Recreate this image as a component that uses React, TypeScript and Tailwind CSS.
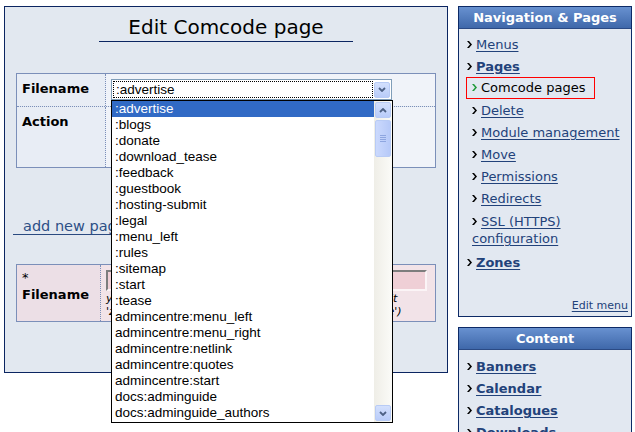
const pages = [
  ':advertise',
  ':blogs',
  ':donate',
  ':download_tease',
  ':feedback',
  ':guestbook',
  ':hosting-submit',
  ':legal',
  ':menu_left',
  ':rules',
  ':sitemap',
  ':start',
  ':tease',
  'admincentre:menu_left',
  'admincentre:menu_right',
  'admincentre:netlink',
  'admincentre:quotes',
  'admincentre:start',
  'docs:adminguide',
  'docs:adminguide_authors',
];

const Bullet = ({ green }: { green?: boolean }) => (
  <svg width="5" height="7" viewBox="0 0 5 7" className="mr-[4px] inline-block align-[1px]">
    <path d="M0 0 H2 L5 3.5 L2 7 H0 L3 3.5 Z" fill={green ? '#1f9a3a' : '#000'} />
  </svg>
);

const XpButton = ({ up }: { up?: boolean }) => (
  <div className="flex h-[16px] w-[16px] items-center justify-center rounded-[2px] border border-[#b8cbf5] bg-gradient-to-b from-[#d3e0fd] to-[#b9ccf9]">
    <svg width="8" height="5" viewBox="0 0 8 5">
      <path d={up ? 'M1 4 L4 1 L7 4' : 'M1 1 L4 4 L7 1'} fill="none" stroke="#4d6185" strokeWidth="1.8" />
    </svg>
  </div>
);

const NavLink = ({ label, bold, sub }: { label: string; bold?: boolean; sub?: boolean }) => (
  <div className={sub ? 'pl-[13px]' : 'pl-[8px]'}>
    <Bullet />
    <a className={`text-[#22427a] underline underline-offset-[2px] ${bold ? 'font-bold' : ''}`}>{label}</a>
  </div>
);

const Panel = ({ title, children, className }: { title: string; children: React.ReactNode; className?: string }) => (
  <div className={`flex flex-col border border-[#0d2a66] bg-[#e2e8f1] ${className ?? ''}`}>
    <div className="h-[22px] border-b border-[#2b4a84] bg-gradient-to-b from-[#6891d0] to-[#3f68aa] text-center text-[13px] leading-[22px] font-bold text-white">
      {title}
    </div>
    {children}
  </div>
);

export default function App() {
  return (
    <div className="flex gap-[10px] pt-[6px] pl-[4px] font-['DejaVu_Sans',sans-serif] text-[13px] leading-[16px] text-black">
      {/* main column */}
      <div className="relative flex h-[367px] w-[444px] flex-col border border-[#0b2561] bg-[#e2e8f0]">
        <h1 className="mx-auto mt-[8px] w-[254px] border-b border-[#0b2561] pb-[2px] text-center text-[20px] leading-[24px]">
          Edit Comcode page
        </h1>

        <div className="mt-[31px] ml-[11px] w-[420px] border border-[#7b8fb9]">
          <div className="flex h-[33px] border-b border-dotted border-[#7b8fb9]">
            <div className="w-[89px] border-r border-dotted border-[#7b8fb9] bg-[#e8edf5] pt-[7px] pl-[5px] font-bold">
              Filename
            </div>
            <div className="flex-1 bg-[#f0f3f9] pt-[5px] pl-[5px]">
              <div className="flex h-[21px] w-[281px] items-center border border-[#7f9db9] bg-white pr-[1px] font-['Liberation_Sans',sans-serif] text-[13.5px]">
                <div className="mx-[1px] h-[17px] flex-1 border border-dotted border-black pl-[2px] leading-[15px]">:advertise</div>
                <XpButton />
              </div>
            </div>
          </div>
          <div className="flex h-[60px]">
            <div className="w-[89px] border-r border-dotted border-[#7b8fb9] bg-[#e8edf5] pt-[7px] pl-[5px] font-bold">
              Action
            </div>
            <div className="flex-1 bg-[#f0f3f9]" />
          </div>
        </div>

        <h2 className="mt-[50px] ml-[8px] w-[260px] border-b border-[#2a4a80] pl-[10px] text-[14.5px] leading-[16px] text-[#2d4f86]">
          add new page
        </h2>

        <div className="mt-[29px] ml-[11px] flex h-[58px] w-[420px] border border-[#7b8fb9]">
          <div className="w-[84px] border-r border-dotted border-[#7b8fb9] bg-[#ecdfe6] pt-[5px] pl-[5px] font-bold">
            <div className="font-normal">*</div>
            <div className="mt-[1px]">Filename</div>
          </div>
          <div className="flex-1 overflow-hidden bg-[#f2e3e8] pt-[5px] pl-[5px]">
            <div className="h-[21px] w-[321px] border-t-2 border-r-2 border-b-2 border-l-2 border-t-[#7d7d7d] border-r-[#fbf4f6] border-b-[#fbf4f6] border-l-[#7d7d7d] bg-[#efcfd6]" />
            <div className="mt-[1px] text-[11px] leading-[13px] whitespace-nowrap italic">
              <div>you may put a zone name and the colon in front of it</div>
              <div>'zone:page_name' (for example, 'site:example_page')</div>
            </div>
          </div>
        </div>

        {/* open dropdown list */}
        <div className="absolute top-[93px] left-[106px] flex h-[323px] w-[282px] border border-black bg-white font-['Liberation_Sans',sans-serif] text-[13.5px]">
          <div className="flex-1">
            {pages.map((p, i) => (
              <div
                key={p}
                className={`h-[16px] pl-[3px] leading-[16px] ${i === 0 ? 'bg-[#316ac5] text-white' : 'text-black'}`}
              >
                {p}
              </div>
            ))}
          </div>
          <div className="flex w-[18px] flex-col items-center bg-gradient-to-r from-[#efeee7] to-[#fbfbf8] py-[1px]">
            <XpButton up />
            <div className="mt-[2px] flex h-[37px] w-[16px] flex-col items-center justify-center gap-[1px] rounded-[2px] border border-[#b8cbf5] bg-gradient-to-r from-[#cbd9fd] to-[#b6c9f8]">
              <div className="h-[1px] w-[6px] bg-[#8ea6e0]" />
              <div className="h-[1px] w-[6px] bg-[#8ea6e0]" />
              <div className="h-[1px] w-[6px] bg-[#8ea6e0]" />
              <div className="h-[1px] w-[6px] bg-[#8ea6e0]" />
            </div>
            <div className="flex-1" />
            <XpButton />
          </div>
        </div>
      </div>

      {/* sidebar */}
      <div className="flex w-[174px] flex-col gap-[10px]">
        <Panel title="Navigation & Pages" className="h-[311px]">
          <div className="flex flex-1 flex-col pt-[8px]">
            <NavLink label="Menus" />
            <div className="mt-[6px]">
              <NavLink label="Pages" bold />
            </div>
            <div className="mt-[2px] ml-[7px] h-[22px] w-[129px] border border-[#ff0000] pt-[2px] pl-[5px]">
              <Bullet green />
              <span>Comcode pages</span>
            </div>
            <div className="mt-[4px]">
              <NavLink label="Delete" sub />
            </div>
            <div className="mt-[6px]">
              <NavLink label="Module management" sub />
            </div>
            <div className="mt-[6px]">
              <NavLink label="Move" sub />
            </div>
            <div className="mt-[6px]">
              <NavLink label="Permissions" sub />
            </div>
            <div className="mt-[6px]">
              <NavLink label="Redirects" sub />
            </div>
            <div className="mt-[6px] pr-[4px] pl-[13px] leading-[17px]">
              <Bullet />
              <a className="text-[#22427a] underline underline-offset-[2px]">SSL (HTTPS) configuration</a>
            </div>
            <div className="mt-[8px]">
              <NavLink label="Zones" bold />
            </div>
            <div className="mt-auto pr-[3px] pb-[3px] text-right text-[11px] leading-[14px]">
              <a className="text-[#22427a] underline underline-offset-[2px]">Edit menu</a>
            </div>
          </div>
        </Panel>
        <Panel title="Content" className="h-[120px]">
          <div className="flex flex-col gap-[6px] pt-[9px]">
            <NavLink label="Banners" bold />
            <NavLink label="Calendar" bold />
            <NavLink label="Catalogues" bold />
            <NavLink label="Downloads" bold />
          </div>
        </Panel>
      </div>
    </div>
  );
}
